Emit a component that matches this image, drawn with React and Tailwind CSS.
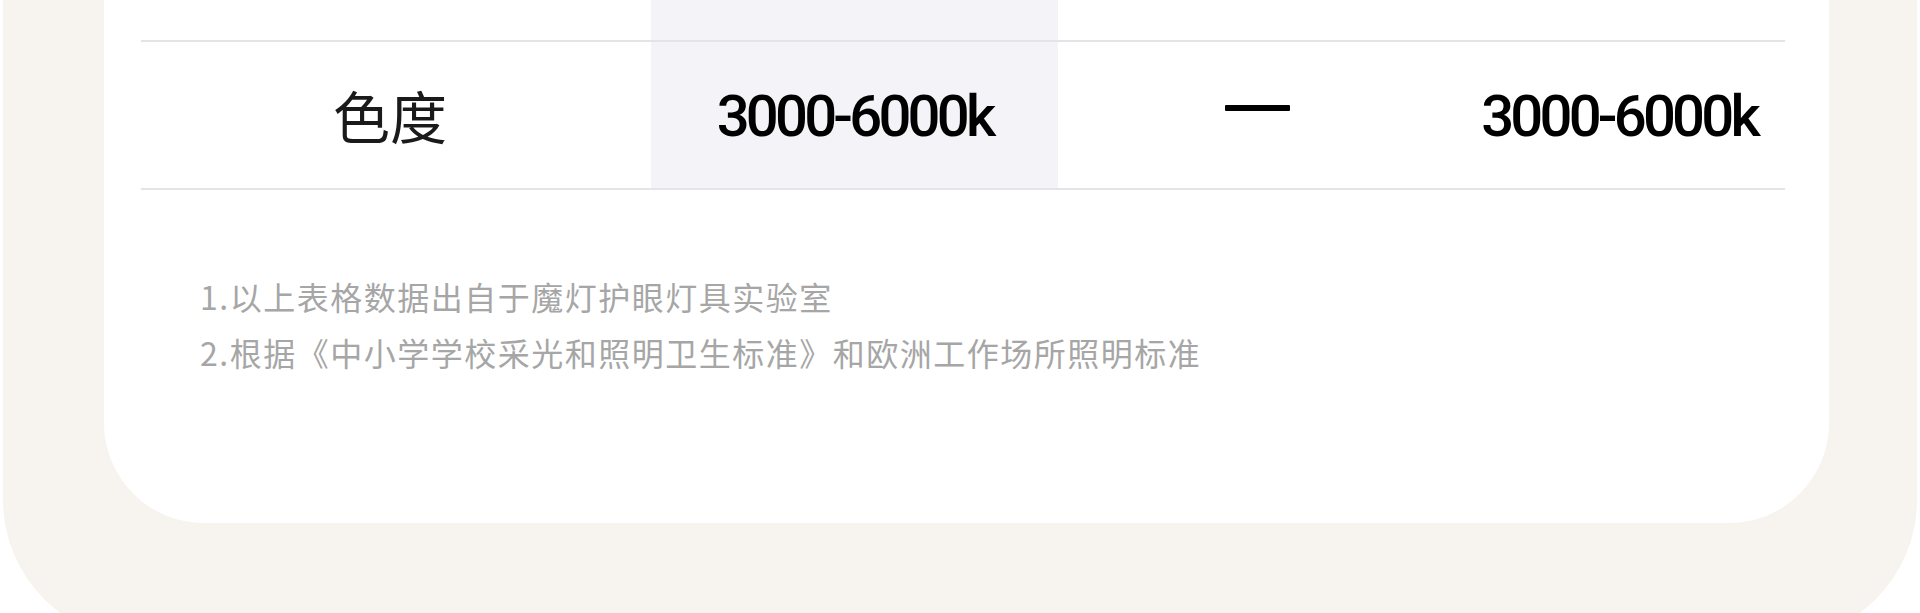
import React from 'react';

const cjk = { fontFamily: '"Noto Sans CJK SC", "Noto Sans", sans-serif' };
const latin = { fontFamily: 'Roboto, "Liberation Sans", Arial, sans-serif' };

export default function App() {
    return (
        <div className="h-[613px] overflow-hidden bg-white">
            {/* beige frame */}
            <div className="-mt-[60px] mx-[3px] bg-[#f7f4f0] rounded-b-[140px] pb-[117px]">
                {/* white card */}
                <div className="ml-[101px] mr-[88px] bg-white rounded-b-[100px] pl-[37px] pr-[44px] pb-[143px]">
                    {/* previous row (cut off) */}
                    <div className="grid grid-cols-[510px_407px_399px_1fr] h-[100px]">
                        <div />
                        <div className="bg-[#f3f3f8]" />
                        <div />
                        <div />
                    </div>
                    <div className="h-[2px] bg-[#e4e4e8]" />

                    {/* 色度 row */}
                    <div className="grid grid-cols-[510px_407px_399px_1fr] h-[146px] items-stretch">
                        <div className="flex items-center justify-center pr-[12px] text-[57px] text-[#1a1a1a]" style={cjk}>
                            色度
                        </div>
                        <div className="flex items-center justify-center bg-[#f3f3f8] text-[58px] font-medium tracking-[-3.8px] text-black pt-[2px]" style={latin}>
                            3000-6000k
                        </div>
                        <div className="flex items-center justify-center">
                            <div className="w-[65px] h-[6px] bg-black rounded-[1px] -mt-[14px]" />
                        </div>
                        <div className="flex items-center justify-center text-[58px] font-medium tracking-[-3.8px] text-black pt-[2px] pr-[4px]" style={latin}>
                            3000-6000k
                        </div>
                    </div>
                    <div className="h-[2px] bg-[#e4e4e8]" />

                    {/* notes */}
                    <div className="mt-[78px] pl-[59px] text-[32px] leading-[56px] tracking-[1.5px] text-[#a6a6a6]" style={cjk}>
                        <p>1.以上表格数据出自于魔灯护眼灯具实验室</p>
                        <p>2.根据《中小学学校采光和照明卫生标准》和欧洲工作场所照明标准</p>
                    </div>
                </div>
            </div>
        </div>
    );
}
